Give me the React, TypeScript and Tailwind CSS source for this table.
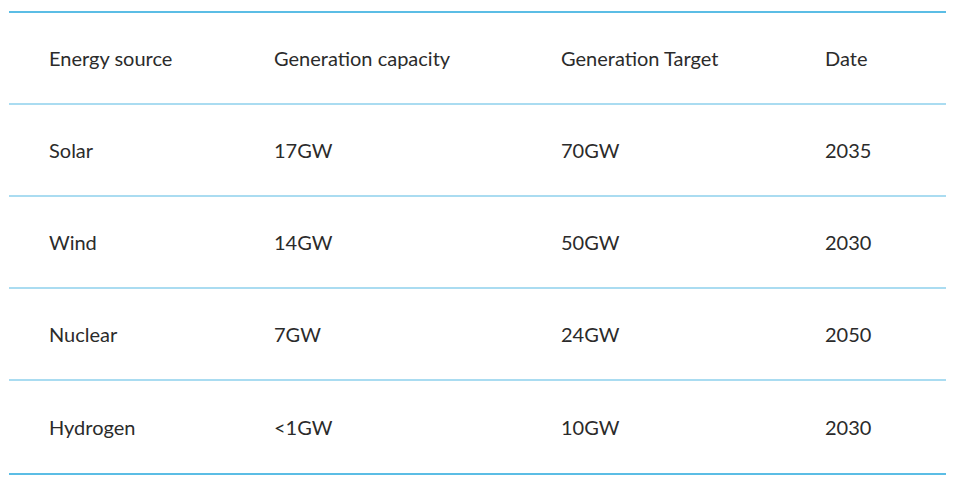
import React from "react";

const rows = [
  ["Energy source", "Generation capacity", "Generation Target", "Date"],
  ["Solar", "17GW", "70GW", "2035"],
  ["Wind", "14GW", "50GW", "2030"],
  ["Nuclear", "7GW", "24GW", "2050"],
  ["Hydrogen", "<1GW", "10GW", "2030"],
];

export default function App() {
  return (
    <div className="w-[959px] h-[485px] bg-white pt-[11px] pl-[9px]" style={{ fontFamily: "Lato, 'Open Sans', sans-serif" }}>
      <div className="w-[937px] border-t-2 border-b-2 border-[#5bbde5]">
        {rows.map((r, i) => (
          <div
            key={i}
            className={`grid grid-cols-[225px_287px_264px_1fr] h-[92px] items-center text-[20px] text-[#2b2b2b] ${i < rows.length - 1 ? "border-b-2 border-[#aadcf1]" : "h-[90px]"}`}
          >
            {r.map((c, j) => (
              <div key={j} className="pl-[40px]">{c}</div>
            ))}
          </div>
        ))}
      </div>
    </div>
  );
}
